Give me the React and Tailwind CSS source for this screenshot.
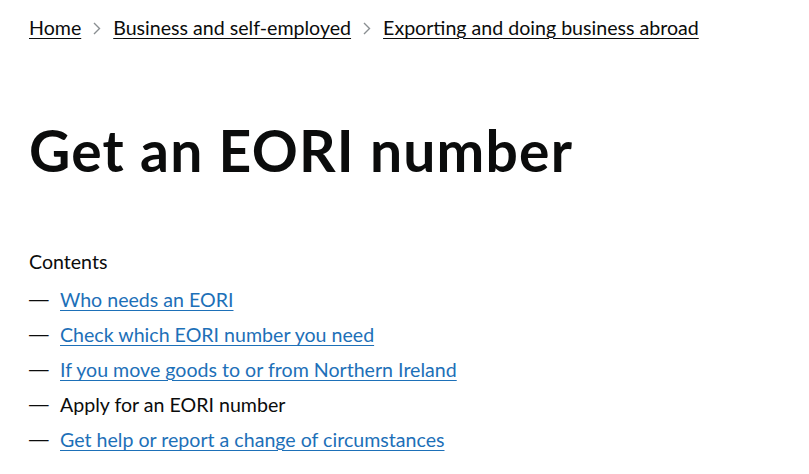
import React from 'react';

const crumbs = ['Home', 'Business and self-employed', 'Exporting and doing business abroad'];

const contents = [
  { label: 'Who needs an EORI', link: true },
  { label: 'Check which EORI number you need', link: true },
  { label: 'If you move goods to or from Northern Ireland', link: true },
  { label: 'Apply for an EORI number', link: false },
  { label: 'Get help or report a change of circumstances', link: true },
];

const Chevron = () => (
  <svg width="8" height="13" viewBox="0 0 8 13" className="ml-[12px] mr-[12px] shrink-0">
    <path d="M1 1 L6.5 6.5 L1 12" fill="none" stroke="#8a8f92" strokeWidth="1.4" />
  </svg>
);

const App = () => {
  return (
    <div className="min-h-screen bg-white text-[#0b0c0c] px-[29px]" style={{ fontFamily: 'Lato, "Noto Sans", sans-serif' }}>
      {/* Breadcrumbs */}
      <nav className="pt-[14px]">
        <ol className="flex items-center text-[19.6px] leading-[28px]">
          {crumbs.map((c, i) => (
            <li key={c} className="flex items-center">
              {i > 0 && <Chevron />}
              <a href="#" className="underline underline-offset-[3px] decoration-1 text-[#0b0c0c]">{c}</a>
            </li>
          ))}
        </ol>
      </nav>

      {/* Title */}
      <h1 className="mt-[76px] text-[57px] leading-[64px] font-bold tracking-[1.2px]">Get an EORI number</h1>

      {/* Contents */}
      <div className="mt-[67px]">
        <h2 className="text-[19.6px] leading-[25px]">Contents</h2>
        <ol className="mt-[13px] text-[19.6px] leading-[25px]">
          {contents.map((item) => (
            <li key={item.label} className="flex items-center mb-[10px]">
              <span className="w-[31px] shrink-0 font-['Liberation_Sans']">—</span>
              {item.link ? (
                <a href="#" className="text-[#1d70b8] underline underline-offset-[3px] decoration-1">{item.label}</a>
              ) : (
                <span>{item.label}</span>
              )}
            </li>
          ))}
        </ol>
      </div>
    </div>
  );
};

export default App;
